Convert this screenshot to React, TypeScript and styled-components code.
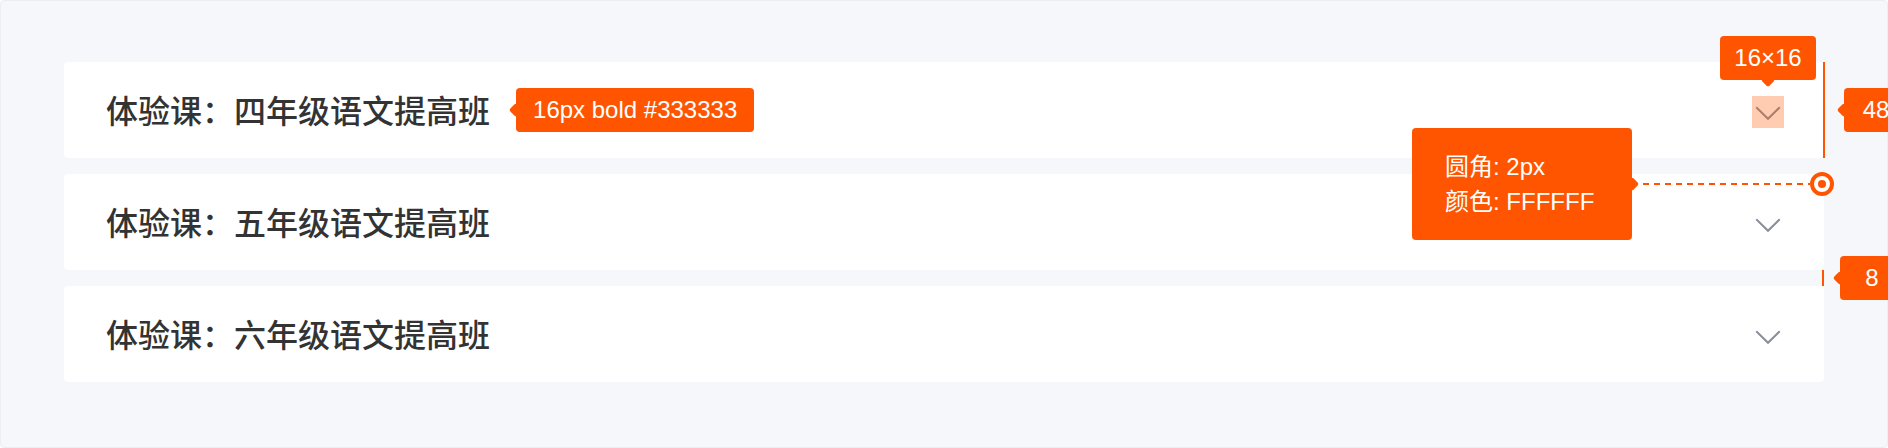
import React from "react";
import styled, { createGlobalStyle, css } from "styled-components";

const ORANGE = "#ff5500";

const GlobalStyle = createGlobalStyle`
  html, body {
    margin: 0;
    padding: 0;
    overflow: hidden;
    background: #ffffff;
  }
  * { box-sizing: border-box; }
`;

const Stage = styled.div`
  position: relative;
  width: 1888px;
  height: 448px;
  overflow: hidden;
  font-family: "Liberation Sans", "Noto Sans CJK SC", sans-serif;
`;

const Panel = styled.div`
  width: 1888px;
  height: 448px;
  padding: 61px 63px 0;
  background: #f6f7fb;
  border: 1px solid #eceef3;
  border-radius: 4px;
  display: flex;
  flex-direction: column;
  gap: 16px;
`;

const Card = styled.div`
  height: 96px;
  background: #ffffff;
  border-radius: 4px;
  padding: 0 40px 0 42px;
  display: flex;
  align-items: center;
`;

const Title = styled.span`
  font-family: "Noto Sans CJK SC", sans-serif;
  font-size: 32px;
  font-weight: 500;
  color: #333333;
  line-height: 1;
  margin-top: -2px;
  white-space: nowrap;
`;

const Spacer = styled.div`
  flex: 1;
`;

const IconBox = styled.div<{ $highlight?: boolean }>`
  position: relative;
  width: 32px;
  height: 32px;
  margin-top: 4px;
  display: flex;
  ${(p) =>
    p.$highlight &&
    css`
      &::after {
        content: "";
        position: absolute;
        inset: 0;
        background: rgba(255, 85, 0, 0.3);
      }
    `}
`;

type Dir = "left" | "right" | "down";

const arrowCss = (dir: Dir) => {
  if (dir === "left")
    return css`
      left: -5px;
      top: 50%;
      margin-top: -5px;
    `;
  if (dir === "right")
    return css`
      right: -5px;
      top: 50%;
      margin-top: -5px;
    `;
  return css`
    bottom: -5px;
    left: 50%;
    margin-left: -5px;
  `;
};

const Tag = styled.div<{ $arrow: Dir; $padX?: number; $width?: number }>`
  position: relative;
  flex: none;
  height: 44px;
  ${(p) => (p.$width ? `width: ${p.$width}px;` : "")}
  padding: 0 ${(p) => p.$padX ?? 17}px;
  background: ${ORANGE};
  color: #ffffff;
  border-radius: 4px;
  font-family: "Liberation Sans", "Noto Sans CJK SC", sans-serif;
  font-size: 24px;
  line-height: 44px;
  text-align: center;
  white-space: nowrap;
  &::before {
    content: "";
    position: absolute;
    width: 10px;
    height: 10px;
    background: ${ORANGE};
    border-radius: 2px;
    transform: rotate(45deg);
    ${(p) => arrowCss(p.$arrow)}
  }
`;

const InlineTag = styled(Tag)`
  margin-left: 26px;
`;

const Overlay = styled.div<{ $x: number; $y: number; $gap?: number }>`
  position: absolute;
  left: ${(p) => p.$x}px;
  top: ${(p) => p.$y}px;
  display: flex;
  align-items: center;
  gap: ${(p) => p.$gap ?? 0}px;
`;

const VLine = styled.div<{ $h: number }>`
  flex: none;
  width: 2px;
  height: ${(p) => p.$h}px;
  background: ${ORANGE};
`;

const Dashed = styled.div`
  flex: none;
  width: 167px;
  height: 2px;
  margin-left: 11px;
  background: repeating-linear-gradient(
    to right,
    ${ORANGE} 0 6px,
    transparent 6px 11px
  );
`;

const Target = styled.div`
  flex: none;
  width: 24px;
  height: 24px;
  border-radius: 50%;
  border: 4px solid ${ORANGE};
  background: #ffffff;
  display: flex;
  align-items: center;
  justify-content: center;
  &::after {
    content: "";
    width: 8px;
    height: 8px;
    border-radius: 50%;
    background: ${ORANGE};
  }
`;

const Tooltip = styled.div`
  position: relative;
  flex: none;
  width: 220px;
  height: 112px;
  padding: 21px 0 0 33px;
  background: ${ORANGE};
  color: #ffffff;
  border-radius: 4px;
  font-family: "Liberation Sans", "Noto Sans CJK SC", sans-serif;
  font-size: 24px;
  line-height: 35px;
  &::before {
    content: "";
    position: absolute;
    right: -5px;
    top: 50%;
    margin-top: -5px;
    width: 10px;
    height: 10px;
    background: ${ORANGE};
    border-radius: 2px;
    transform: rotate(45deg);
  }
`;

const TipLine = styled.div`
  white-space: nowrap;
`;

const Chevron = () => (
  <svg width="32" height="32" viewBox="0 0 16 16" fill="none">
    <path
      d="M2.5 6 L8 11.4 L13.5 6"
      stroke="#8a8e99"
      strokeWidth="1"
      strokeLinecap="square"
    />
  </svg>
);

const courses = ["四年级", "五年级", "六年级"];

export default function App() {
  return (
    <>
      <GlobalStyle />
      <Stage>
        <Panel>
          {courses.map((g, i) => (
            <Card key={g}>
              <Title>体验课：{g}语文提高班</Title>
              {i === 0 && <InlineTag $arrow="left">16px bold #333333</InlineTag>}
              <Spacer />
              <IconBox $highlight={i === 0}>
                <Chevron />
              </IconBox>
            </Card>
          ))}
        </Panel>

        <Overlay $x={1720} $y={36}>
          <Tag $arrow="down" $width={96} $padX={0}>
            16×16
          </Tag>
        </Overlay>
        <Overlay $x={1823} $y={62} $gap={19}>
          <VLine $h={96} />
          <Tag $arrow="left" $width={64} $padX={0}>
            48
          </Tag>
        </Overlay>
        <Overlay $x={1412} $y={128}>
          <Tooltip>
            <TipLine>圆角: 2px</TipLine>
            <TipLine>颜色: FFFFFF</TipLine>
          </Tooltip>
          <Dashed />
          <Target />
        </Overlay>
        <Overlay $x={1822} $y={256} $gap={16}>
          <VLine $h={16} />
          <Tag $arrow="left" $width={64} $padX={0}>
            8
          </Tag>
        </Overlay>
      </Stage>
    </>
  );
}
